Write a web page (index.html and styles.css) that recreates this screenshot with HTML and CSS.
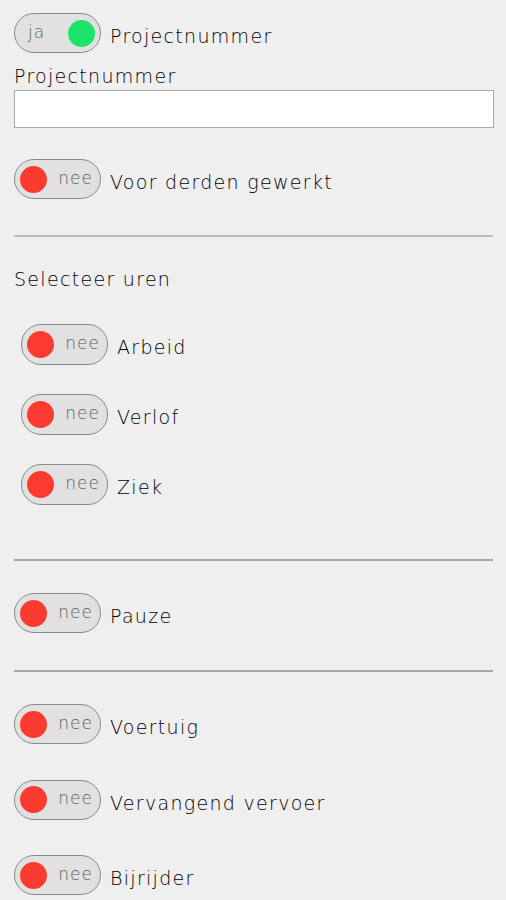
FILE: index.html
```html
<!DOCTYPE html>
<html>
<head>
<meta charset="utf-8">
<link rel="stylesheet" href="styles.css">
</head>
<body>
<div class="page">
  <div class="row first">
    <div class="toggle on"><span class="tlabel">ja</span><span class="knob"></span></div>
    <span class="label">Projectnummer</span>
  </div>
  <div class="field-label">Projectnummer</div>
  <input class="text-input" type="text">
  <div class="row after-input">
    <div class="toggle off"><span class="knob"></span><span class="tlabel">nee</span></div>
    <span class="label">Voor derden gewerkt</span>
  </div>
  <hr class="divider d1">
  <div class="section-title">Selecteer uren</div>
  <div class="group indent">
    <div class="row">
      <div class="toggle off"><span class="knob"></span><span class="tlabel">nee</span></div>
      <span class="label">Arbeid</span>
    </div>
    <div class="row">
      <div class="toggle off"><span class="knob"></span><span class="tlabel">nee</span></div>
      <span class="label">Verlof</span>
    </div>
    <div class="row">
      <div class="toggle off"><span class="knob"></span><span class="tlabel">nee</span></div>
      <span class="label">Ziek</span>
    </div>
  </div>
  <hr class="divider d2">
  <div class="row pauze">
    <div class="toggle off"><span class="knob"></span><span class="tlabel">nee</span></div>
    <span class="label">Pauze</span>
  </div>
  <hr class="divider d3">
  <div class="group wide">
    <div class="row">
      <div class="toggle off"><span class="knob"></span><span class="tlabel">nee</span></div>
      <span class="label">Voertuig</span>
    </div>
    <div class="row">
      <div class="toggle off"><span class="knob"></span><span class="tlabel">nee</span></div>
      <span class="label">Vervangend vervoer</span>
    </div>
    <div class="row">
      <div class="toggle off"><span class="knob"></span><span class="tlabel">nee</span></div>
      <span class="label">Bijrijder</span>
    </div>
  </div>
</div>
</body>
</html>
```
FILE: styles.css
```css
html, body {
  margin: 0;
  padding: 0;
  background: #efefef;
}
body {
  font-family: "DejaVu Sans", "Liberation Sans", sans-serif;
  font-weight: 300;
  color: #000;
  overflow: hidden;
}
.page {
  padding: 13px 13px 0 14px;
  display: flex;
  flex-direction: column;
}
.row {
  display: flex;
  align-items: center;
  gap: 9px;
  height: 40px;
}
.label {
  font-size: 19px;
  letter-spacing: 1.3px;
  padding-top: 6px;
}
.toggle {
  box-sizing: border-box;
  width: 87px;
  height: 40px;
  border: 1.5px solid #8a8a8a;
  border-radius: 20px;
  background: #e1e1e1;
  display: flex;
  align-items: center;
  justify-content: space-between;
}
.toggle.off { padding: 0 7px 0 5px; }
.toggle.on { padding: 0 5px 0 13px; }
.knob {
  width: 27px;
  height: 27px;
  border-radius: 50%;
}
.off .knob { background: #fb3a30; }
.on .knob { background: #1de46a; }
.tlabel {
  font-size: 17px;
  color: #5e5e5e;
  letter-spacing: 1px;
  padding-bottom: 3px;
}
.field-label {
  font-size: 19px;
  letter-spacing: 1.3px;
  margin-top: 12px;
  height: 25px;
}
.text-input {
  box-sizing: border-box;
  width: 480px;
  height: 38px;
  margin: 0;
  border: 1.5px solid #a9a9a9;
  background: #fff;
}
.after-input { margin-top: 31px; }
.divider {
  width: 479px;
  margin: 0;
  border: none;
  border-top: 2px solid #bcbcbc;
}
.d1 { margin-top: 36px; }
.section-title {
  font-size: 19px;
  letter-spacing: 1.3px;
  margin-top: 31px;
  height: 25px;
}
.group {
  display: flex;
  flex-direction: column;
}
.group.indent {
  padding-left: 7px;
  margin-top: 31px;
  gap: 30px;
}
.group.indent .row { height: 40px; }
.group.indent .toggle { height: 41px; }
.d2 { margin-top: 55px; border-top-color: #a8a8a8; }
.pauze { margin-top: 32px; }
.d3 { margin-top: 37px; border-top-color: #a8a8a8; }
.group.wide {
  margin-top: 32px;
  gap: 35.5px;
}
```
